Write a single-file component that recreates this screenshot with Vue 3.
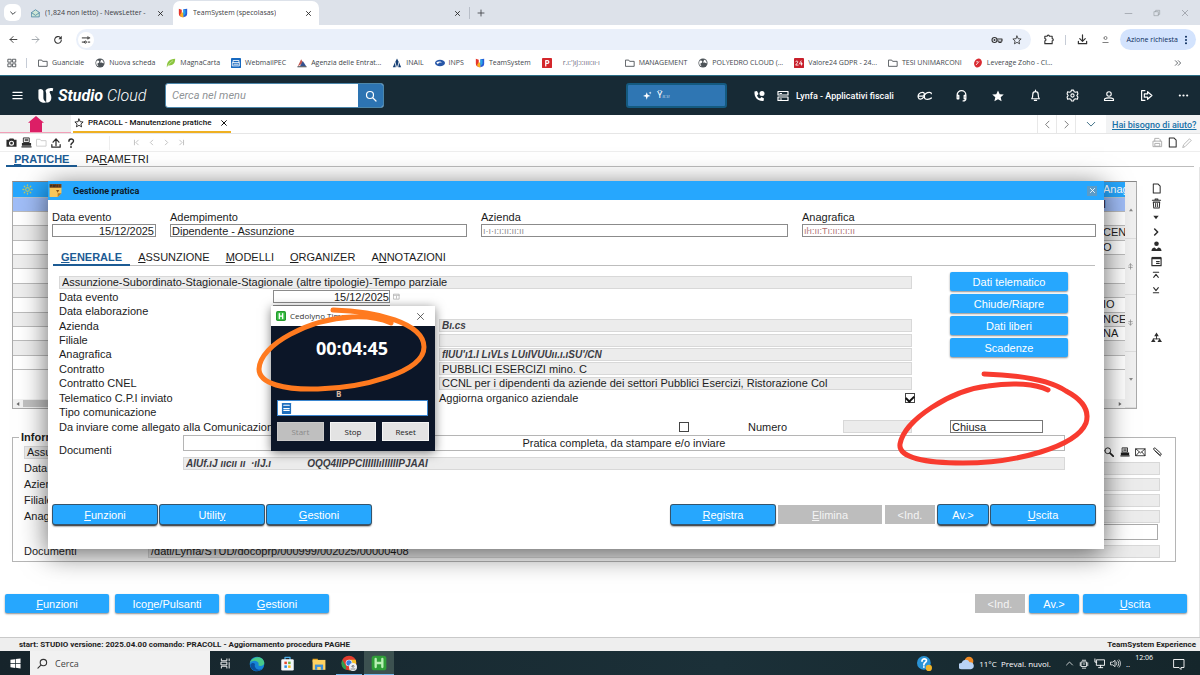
<script setup>
import { h, ref } from 'vue'

const S = (d, w = 2) => ['path', { d, fill: 'none', stroke: 'currentColor', 'stroke-width': w, 'stroke-linecap': 'round', 'stroke-linejoin': 'round' }]
const F = (d, fill = 'currentColor') => ['path', { d, fill }]
const C = (cx, cy, r, fill = 'currentColor') => ['circle', { cx, cy, r, fill }]
const R = (x, y, width, height, fill = 'currentColor', rx = 0) => ['rect', { x, y, width, height, fill, rx }]

const star = 'M12 2.5l2.9 6.4 7 .7-5.300 4.700 1.600 6.900L12 17.600l-6.200 3.600 1.600-6.900L2.100 9.600l7-.7z'

const icons = {
  chevDown: [S('M5 9l7 7 7-7', 3)],
  chevThin: [S('M3 8l9 9 9-9', 2)],
  chevUp: [S('M4 16l8-8 8 8', 2)],
  left: [S('M16 3l-9 9 9 9')],
  right: [S('M8 3l9 9-9 9')],
  leftBold: [S('M16 4l-8 8 8 8', 3)],
  rightBold: [S('M8 3l9 9-9 9', 4.500)],
  next: [S('M8 4l8 8-8 8', 3)],
  first: [S('M5 4v16M18 4l-8 8 8 8', 3)],
  last: [S('M19 4v16M6 4l8 8-8 8', 3)],
  close: [S('M5 5l14 14M19 5L5 19', 3)],
  closeThin: [S('M4 4l16 16M20 4L4 20', 2)],
  plus: [S('M12 3v18M3 12h18', 2.500)],
  minus: [S('M3 12h18', 1.600)],
  restore: [S('M4 8h12v12H4zM8 8V4h12v12h-4', 1.600)],
  mail: [F('M2 9l10-7 10 7v12H2z', '#cfe6d6'), S('M2 9l10-7 10 7v12H2zM2 10l10 7 10-7', 2)],
  arrowL: [S('M21 12H3M11 4l-8 8 8 8', 2.400)],
  arrowR: [S('M3 12h18M13 4l8 8-8 8', 2.400)],
  reload: [S('M20 12a8 8 0 1 1-2.500-6', 2.500), F('M21 2v8h-8z')],
  tune: [S('M3 7h8M17 17h4M3 17h4M20 7h1', 2.400), S('M14 7a2.500 2.500 0 1 0 5 0a2.500 2.500 0 1 0-5 0M8 17a2.500 2.500 0 1 0 5 0a2.500 2.500 0 1 0-5 0', 2.400)],
  key: [S('M2 12a5 5 0 1 0 10 0a5 5 0 1 0-10 0M12 10h10v4h-2v3h-4v-3h-4', 2.200), C(7, 12, 2)],
  star: [S(star, 2)],
  starFull: [F(star)],
  puzzle: [S('M4 5h5a2.500 2.500 0 0 1 5 0h6v5a2.500 2.500 0 0 1 0 5v6H4v-6a2.500 2.500 0 0 0 0-5z', 2.400)],
  download: [S('M12 2v13M6 10l6 6 6-6M3 16v5h18v-5', 2.600)],
  person: [S('M8 8a4 4 0 1 0 8 0a4 4 0 1 0-8 0M5 20h14', 2.500)],
  dotsV: [C(12, 4, 2.400), C(12, 12, 2.400), C(12, 20, 2.400)],
  dotsH: [C(4, 12, 2.400), C(12, 12, 2.400), C(20, 12, 2.400)],
  apps: [S('M3 3h7v7H3zM14 3h7v7h-7zM3 14h7v7H3zM14 14h7v7h-7z', 2)],
  folder: [S('M2 5h7l2 3h11v12H2z', 2)],
  globe: [C(12, 12, 11, '#4d5358'), F('M4 7c4-3 7 0 6 3s-5 1-4 5 3 4 2 5c-4-2-7-8-4-13zM14 4c5 0 7 5 7 8-3 2-4-2-7-1s-2-3 0-3z', '#fff')],
  leaf: [F('M2 22C2 8 8 3 22 2c0 12-6 17-17 16z', '#8bc53f'), S('M3 21C7 14 11 10 16 7', 1.500)],
  webmail: [R(0, 0, 24, 24, '#1769c0', 2), S('M5 11V6h14v5M4 11h16v8H4zM7 15h10', 2)],
  agenzia: [F('M2 20L10 3l5 9z', '#c2574f'), F('M7 20l7-13 8 13z', '#34518f'), S('M2 21h20', 2.500)],
  inail: [F('M12 1l4 8-4 14-4-14zM7 11l2 11H2zM17 11l5 11h-7z', '#163f74')],
  inps: [['ellipse', { cx: 12, cy: 12, rx: 12, ry: 8, fill: '#2857a8' }], F('M3 11c5-4 11-3 14 0-5-1-9 0-10 4z', '#fff')],
  team: [F('M2 2l7 2v10c0 3 3 4 3 8C6 22 2 19 2 14z', '#e5352b'), F('M9 10l5 2v10C9 23 5 20 5 16z', '#f7b025'), F('M13 3l9-1v12c0 5-4 8-9 8z', '#2a5bd7'), F('M13 3l5 1v10l-5 6z', '#25a7e8')],
  pBox: [R(0, 0, 24, 24, '#d4272b', 1), S('M9 19V6h4a3.500 3.500 0 0 1 0 7H9', 3)],
  box24: [R(0, 0, 24, 24, '#c8202b', 1), S('M4 9c1-3 6-2 5 1l-5 7h6M17 7l-4 7h7M18 11v6', 2)],
  zoho: [['ellipse', { cx: 12, cy: 12, rx: 9, ry: 11, fill: '#d92b32', transform: 'rotate(25 12 12)' }], S('M8 16l6-7M9 9l2 0', 2)],
  more: [S('M4 5l7 7-7 7M13 5l7 7-7 7', 2.400)],
  menu: [S('M2 5h20M2 12h20M2 19h20', 2.600)],
  logo: [F('M2 4c3-2 6-1 7 2v10c0 3 3 4 4 6-6 1-11-2-11-7z'), F('M12 5c3-4 8-4 11-3l-1 4c-3-1-5 0-4 2 4 6 3 14-5 14V9z')],
  search: [S('M3 10a7 7 0 1 0 14 0a7 7 0 1 0-14 0M15.500 15.500L22 22', 2.400)],
  sparkle: [F('M10 3l2.500 7L20 13l-7.500 2.500L10 23l-2.500-7.500L0 13l7.500-3zM19 1l1 3 3 1-3 1-1 3-1-3-3-1 3-1z')],
  phone: [F('M3 3l5-1 3 6-3 3c1 3 3 5 6 6l3-3 5 3-1 5C10 23 2 15 3 3z'), C(18, 7, 5)],
  stack: [S('M2 3h20v7H2zM2 14h20v7H2zM6 7h3M6 18h3', 2.400)],
  ec: [S('M2 13h7c3 0 4-6 0-6-5 0-8 4-7 8s6 4 9-1c1-4 5-7 9-7 2 0 3 1 3 2M12 13c-1 4 2 5 5 5s5-1 6-2', 2)],
  headset: [S('M4 14V11a8 8 0 0 1 16 0v7c0 2-2 4-5 4M4 12h3v6H4zM17 12h3v6h-3z', 2.400)],
  bell: [S('M5 18c1.500-2 2-4 2-8a5 5 0 0 1 10 0c0 4 .5 6 2 8zM10 21h4M12 2v2', 2.200)],
  gear: [S('M10 2h4l1 3 3 1 3-1 1 4-2 3 2 3-1 4-3-1-3 1-1 3h-4l-1-3-3-1-3 1-1-4 2-3-2-3 1-4 3 1 3-1zM9 12a3 3 0 1 0 6 0a3 3 0 1 0-6 0', 2)],
  user: [S('M7.500 8a4.500 4.500 0 1 0 9 0a4.500 4.500 0 1 0-9 0M3 21v-3c4-3 14-3 18 0v3z', 2.200)],
  logout: [S('M9 3H3v18h6', 2.200), S('M8 9h6V5l8 7-8 7v-4H8z', 2.200)],
  home: [F('M12 0l12 10h-3v14H3V10H0z')],
  camera: [F('M1 6h5l2-3h8l2 3h5v15H1zM12 8a5.500 5.500 0 1 0 0 11 5.500 5.500 0 0 0 0-11zM12 10.500a3 3 0 1 1 0 6 3 3 0 0 1 0-6z')],
  printer: [S('M6 2h12v10H6zM9 5h6M9 8h6', 2), F('M2 13h20v6H2zM1 20h22v3H1z')],
  printerOut: [S('M6 9V3h9l3 3v3M3 9h18v12H3zM7 14h10v6H7z', 2)],
  upload: [S('M12 18V3M5 10l7-8 7 8M2 16v6h20v-6', 3)],
  help: [S('M7 8c0-7 11-7 11-1 0 5-6 4-6 9', 3.500), C(12, 21.500, 2.200)],
  page: [S('M5 2h10l5 5v15H5z', 2.200)],
  pencil: [S('M2 22l2-6L18 2l4 4L8 20z', 2)],
  trash: [S('M3 5h18M9 5V2h6v3M5 9l1 13h12l1-13z', 2.200), S('M10 12v7M14 12v7', 2)],
  tri: [F('M4 8h16l-8 11z')],
  triUp: [F('M4 17h16L12 6z')],
  triLeft: [F('M17 4v16L6 12z')],
  triRight: [F('M7 4v16l11-8z')],
  people: [C(12, 6, 5), F('M1 22c0-6 4-8 7-8l4 4 4-4c3 0 7 2 7 8z')],
  card: [S('M2 4h20v17H2zM12 12h6M12 16h6', 2.500), F('M2 2h20v5H2z')],
  top: [S('M4 4h16M5 19l7-9 7 9', 3.200)],
  bottom: [S('M4 20h16M5 5l7 9 7-9', 3.200)],
  tree: [F('M12 1l5 8H7zM5 14l5 8H0zM19 14l5 8H14z'), S('M12 9v6M5 15h14', 2)],
  updown: [S('M6 9l6-6 6 6M12 3v18M6 15h12', 2.500)],
  downup: [S('M6 15l6 6 6-6M12 3v18M6 9h12', 2.500)],
  loupe: [S('M2 9a7 7 0 1 0 14 0a7 7 0 1 0-14 0', 2.200), S('M14.500 14.500L22 22', 4)],
  envelope: [S('M2 4h20v15H2zM2 4l10 9L22 4M2 19l7-8M22 19l-7-8', 1.800)],
  clip: [S('M20 21L5 7c-3-3 0-6 3-4l13 12c3 3 0 6-3 4L8 10', 2.200)],
  sun: [S('M8 12a4 4 0 1 0 8 0a4 4 0 1 0-8 0', 2.500), S('M12 2v2M12 20v2M2 12h2M20 12h2M5 5l1 1M18 18l1 1M19 5l-1 1M6 18l-1 1', 3)],
  note: [F('M1 5h22v12l-7 7H1z', '#f7c65b'), R(1, 0, 22, 7, '#7c4a1d'), S('M3 5V2h2v2M8 5V2h2v3M13 5V2h-1M16 2v3M20 2v3', 1), F('M16 24v-7h7z', '#b87a22'), F('M13 11l6 0-3 5z', '#8b5317')],
  calendar: [S('M3 4h18v17H3zM3 8h18M12 11v7', 2)],
  win: [F('M1 4l10-1.500V11.500H1zM12.500 2.300L23 1v10.500H12.500zM1 13h10v8.700L1 20.300zM12.500 13H23v10l-10.500-1.500z')],
  taskview: [S('M3 2v4h12V2M3 22v-4h12v4M3 9h12v6H3zM20 2v4M20 10v12', 2)],
  edge: [C(12, 12, 11, '#1683d8'), F('M1 11C3 0 21-2 23 10c0 5-7 6-9 4 3-6-8-10-13-3z', '#49c98b'), F('M9 12c-2 6 4 11 11 7-5 6-18 4-18-6 2-3 5-3 7-1z', '#0b4f9c')],
  store: [S('M8 6V2h8v4', 2), R(2, 5, 20, 18, '#f4f7fa', 2), R(7, 9, 4, 4, '#e6492d'), R(13, 9, 4, 4, '#6cb33e'), R(7, 15, 4, 4, '#2a8fe0'), R(13, 15, 4, 4, '#f5b81d')],
  explorer: [R(1, 3, 9, 6, '#e8a320'), R(1, 5, 22, 17, '#ffd262'), R(5, 13, 14, 9, '#3f8fd8'), R(9, 17, 6, 5, '#ffd262')],
  chrome: [C(12, 12, 11, '#e23d2f'), F('M2 7l6 11-1 4C1 20-1 13 2 7z', '#2f9e4d'), F('M12 7h10c3 8-3 16-10 16l5-9z', '#f6c026'), C(12, 12, 5, '#fff'), C(12, 12, 4, '#3b7de0'), C(18, 18, 6, '#eef0f2'), S('M16.500 17a1.500 1.500 0 1 0 3 0a1.500 1.500 0 1 0-3 0M15 21h6', 1)],
  hApp: [R(1, 1, 22, 22, '#2f9e38', 4), S('M7 6v12M17 6v12M7 12h10', 3.500)],
  hWin: [R(0, 0, 24, 24, '#239a2c', 4), R(3, 3, 18, 18, '#3fc24a', 2), S('M8 6v12M16 6v12M8 12h8', 3)],
  entry: [R(2, 0, 20, 24, '#1f6fbe', 1), S('M6 5h12M6 12h12M6 16h12', 2.500)],
  helpBlue: [C(11, 11, 11, '#2a93d5'), S('M8 8c0-5 8-4 7 0-1 3-4 2-4 6M11 17.500v.2', 2.800), C(19, 19, 5, '#f0b429')],
  cloud: [C(16, 8, 7, '#f08a24'), F('M4 21a5 5 0 0 1 0-10 7 7 0 0 1 13-1 5.500 5.500 0 0 1 2 11z', '#b9d3f5')],
  cast: [S('M6 7h12v11H6zM8 3h8M8 22h8M10 12h4M3 9v7M21 9v7', 2)],
  screen: [S('M6 4h17v12H6zM2 2v7h4M10 21h9M14 16v5', 2)],
  sound: [S('M2 9h4l5-4v14l-5-4H2zM14 9c1 2 1 4 0 6M17 6c3 4 3 8 0 12M20 4c4 5 4 11 0 16', 1.700)],
  chat: [S('M2 3h20v16h-6v4l-4-4H2z', 1.800)],
}

const Ico = (p) =>
  h('svg', { viewBox: '0 0 24 24', width: p.size || 10, height: p.size || 10, 'aria-hidden': 'true', class: 'ico' },
    icons[p.name].map(([tag, attrs]) => h(tag, attrs)))
Ico.props = ['name', 'size']

const bookmarks = [
  { icon: 'folder', text: 'Guanciale' },
  { icon: 'globe', text: 'Nuova scheda' },
  { icon: 'leaf', text: 'MagnaCarta', tone: 'pale' },
  { icon: 'webmail', text: 'WebmailPEC', tone: 'white' },
  { icon: 'agenzia', text: 'Agenzia delle Entrat...' },
  { icon: 'inail', text: 'INAIL' },
  { icon: 'inps', text: 'INPS' },
  { icon: 'team', text: 'TeamSystem' },
  { icon: 'pBox', text: 'r.ı:\')ıJ:ı:ıııı:ıı·ı', tone: 'white', smudge: true },
  { icon: 'folder', text: 'MANAGEMENT' },
  { icon: 'globe', text: 'POLYEDRO CLOUD (...' },
  { icon: 'box24', text: 'Valore24 GDPR - 24...', tone: 'white' },
  { icon: 'folder', text: 'TESI UNIMARCONI' },
  { icon: 'zoho', text: 'Leverage Zoho - Cl...', tone: 'white' },
]
const headerIcons = [
  ['ec', 'Euroconference', 15], ['headset', 'Assistenza', 13], ['starFull', 'Preferiti', 14], ['bell', 'Notifiche', 13],
  ['gear', 'Impostazioni', 13], ['user', 'Profilo', 12], ['logout', 'Esci', 13], ['dotsH', 'Altro', 11],
]
const gridRows = ['I', '', 'CEN', 'O', '', '', '', 'IO', 'NCES', 'NA', '', '']
const sideIcons = [
  ['page', 'Nuovo'], ['trash', 'Elimina riga'], ['tri', 'Giù'], ['rightBold', 'Avanti'], ['people', 'Anagrafica'],
  ['card', 'Scheda'], ['top', 'Inizio'], ['bottom', 'Fine'],
]
const infoRows = ['Data evento', 'Azienda', 'Filiale', 'Anagrafica']
const dialogTabs = [['', 'G', 'ENERALE'], ['', 'A', 'SSUNZIONE'], ['', 'M', 'ODELLI'], ['', 'O', 'RGANIZER'], ['A', 'N', 'NOTAZIONI']]
const formRows = [
  { id: 'azienda', label: 'Azienda', value: 'Bı.cs', smudge: true },
  { id: 'filiale', label: 'Filiale', value: '' },
  { id: 'anagrafica', label: 'Anagrafica', value: 'fIUU\'ı1.I LıVLs LUıIVUUıı.ı.ıSU\'/CN', smudge: true },
  { id: 'contratto', label: 'Contratto', value: 'PUBBLICI ESERCIZI mino. C' },
  { id: 'cnel', label: 'Contratto CNEL', value: 'CCNL per i dipendenti da aziende dei settori Pubblici Esercizi, Ristorazione Col' },
]
const actions = ['Dati telematico', 'Chiude/Riapre', 'Dati liberi', 'Scadenze']
const organico = ref(true)
const allegato = ref(false)
</script>

<template>
  <div class="page">
    <div class="tabstrip">
      <button class="tab-menu" aria-label="Cerca schede"><Ico name="chevDown" :size="8" /></button>
      <div class="btab inactive">
        <Ico name="mail" :size="9" class="blue" /><span class="btab-name">(1,824 non letto) - NewsLetter -</span>
        <button aria-label="Chiudi scheda"><Ico name="close" :size="7" /></button>
      </div>
      <div class="btab active">
        <Ico name="team" :size="10" /><span class="btab-name">TeamSystem (specolasas)</span>
        <button aria-label="Chiudi scheda"><Ico name="close" :size="7" /></button>
      </div>
      <div class="btab third"><button aria-label="Chiudi scheda"><Ico name="close" :size="7" /></button></div>
      <button class="new-tab" aria-label="Nuova scheda"><Ico name="plus" :size="8" /></button>
      <div class="win-controls">
        <button aria-label="Riduci"><Ico name="minus" :size="9" /></button>
        <button aria-label="Ripristina"><Ico name="restore" :size="8" /></button>
        <button aria-label="Chiudi"><Ico name="closeThin" :size="8" /></button>
      </div>
    </div>

    <div class="navbar">
      <button aria-label="Indietro"><Ico name="arrowL" :size="9" /></button>
      <button aria-label="Avanti" class="faint"><Ico name="arrowR" :size="9" /></button>
      <button aria-label="Ricarica"><Ico name="reload" :size="10" /></button>
      <div class="omnibox">
        <span class="tune"><Ico name="tune" :size="10" /></span>
        <input type="text" aria-label="Indirizzo" />
        <Ico name="key" :size="12" /><Ico name="star" :size="10" />
      </div>
      <button aria-label="Estensioni"><Ico name="puzzle" :size="11" /></button>
      <span class="vline"></span>
      <button aria-label="Download"><Ico name="download" :size="11" /></button>
      <button aria-label="Profilo" class="dim"><Ico name="person" :size="9" /></button>
      <button class="action-required">Azione richiesta <Ico name="dotsV" :size="10" /></button>
    </div>

    <nav class="bookmarks" aria-label="Preferiti">
      <button aria-label="App"><Ico name="apps" :size="10" /></button>
      <span class="vline"></span>
      <a v-for="b in bookmarks" :key="b.text" href="#" :class="{ smudge: b.smudge }">
        <Ico :name="b.icon" :size="10" :class="b.tone" /><span>{{ b.text }}</span>
      </a>
      <button class="more" aria-label="Altri preferiti"><Ico name="more" :size="8" /></button>
    </nav>

    <header class="apphead">
      <button class="burger" aria-label="Menu"><Ico name="menu" :size="11" /></button>
      <div class="brand"><Ico name="logo" :size="17" /><span><b>Studio</b> Cloud</span></div>
      <form class="search" @submit.prevent>
        <input type="text" placeholder="Cerca nel menu" aria-label="Cerca nel menu" />
        <button aria-label="Cerca"><Ico name="search" :size="12" /></button>
      </form>
      <button class="ai"><Ico name="sparkle" :size="9" /><span class="ai-text">Ÿ<i>ıı:ıı</i></span></button>
      <div class="product">
        <Ico name="phone" :size="12" /><Ico name="stack" :size="12" /><span>Lynfa - Applicativi fiscali</span>
      </div>
      <div class="head-icons">
        <button v-for="[n, l, s] in headerIcons" :key="n" :aria-label="l"><Ico :name="n" :size="s" /></button>
      </div>
    </header>

    <div class="apptabs">
      <button class="home" aria-label="Home"><Ico name="home" :size="16" /></button>
      <div class="apptab"><Ico name="star" :size="10" /><span>PRACOLL - Manutenzione pratiche</span><button aria-label="Chiudi"><Ico name="close" :size="8" /></button></div>
      <div class="apptabs-nav">
        <button aria-label="Precedente"><Ico name="left" :size="9" /></button>
        <button aria-label="Successivo"><Ico name="right" :size="9" /></button>
        <button aria-label="Elenco" class="wide"><Ico name="chevThin" :size="10" /></button>
      </div>
      <a href="#" class="help-link">Hai bisogno di aiuto?</a>
    </div>

    <div class="tools">
      <div class="tool-set">
        <button aria-label="Cattura"><Ico name="camera" :size="11" /></button>
        <button aria-label="Stampa"><Ico name="printer" :size="11" /></button>
        <button aria-label="Apri" class="off"><Ico name="folder" :size="11" /></button>
        <button aria-label="Esporta"><Ico name="upload" :size="10" /></button>
        <button aria-label="Guida"><Ico name="help" :size="10" /></button>
      </div>
      <div class="tool-set pager">
        <button aria-label="Primo"><Ico name="first" :size="7" /></button>
        <button aria-label="Precedente"><Ico name="leftBold" :size="7" /></button>
        <button aria-label="Successivo"><Ico name="next" :size="7" /></button>
        <button aria-label="Ultimo"><Ico name="last" :size="7" /></button>
      </div>
      <div class="tool-set end">
        <button aria-label="Stampa elenco" class="grey"><Ico name="printerOut" :size="11" /></button>
        <button aria-label="Nuovo"><Ico name="page" :size="11" /></button>
        <button aria-label="Modifica" class="grey"><Ico name="pencil" :size="10" /></button>
      </div>
    </div>

    <nav class="maintabs" aria-label="Sezioni">
      <a href="#" class="current"><u>P</u>RATICHE</a>
      <a href="#">PA<u>R</u>AMETRI</a>
    </nav>

    <main class="workspace">
      <div class="listing">
        <div class="grid-frame">
          <div class="grid-main">
            <table>
              <thead><tr><th><Ico name="sun" :size="11" class="sun" /></th><th class="name">Anag</th></tr></thead>
              <tbody><tr v-for="(r, i) in gridRows" :key="i"><td></td><td class="name">{{ r }}</td></tr></tbody>
            </table>
            <div class="hscroll"><Ico name="triLeft" :size="6" /><span class="thumb"></span><Ico name="triRight" :size="6" /></div>
          </div>
          <div class="vscroll">
            <span><Ico name="triUp" :size="6" /></span><span><Ico name="updown" :size="7" /></span>
            <span><Ico name="downup" :size="7" /></span><span><Ico name="tri" :size="6" /></span>
          </div>
        </div>
        <div class="side">
          <div class="side-icons">
            <button v-for="[n, l] in sideIcons" :key="n" :aria-label="l"><Ico :name="n" :size="['tri', 'top', 'bottom', 'rightBold'].includes(n) ? 8 : 11" /></button>
          </div>
          <button class="tree" aria-label="Struttura"><Ico name="tree" :size="11" /></button>
        </div>
      </div>

      <fieldset class="info">
        <legend>Informazioni</legend>
        <div class="info-head">
          <div class="ro">Assunzione</div>
          <div class="info-icons">
            <button aria-label="Cerca"><Ico name="loupe" :size="10" /></button>
            <button aria-label="Stampa"><Ico name="printer" :size="10" /></button>
            <button aria-label="Invia"><Ico name="envelope" :size="11" /></button>
            <button aria-label="Allega"><Ico name="clip" :size="10" /></button>
          </div>
        </div>
        <div v-for="r in infoRows" :key="r" class="info-row"><span>{{ r }}</span><div class="ro"></div></div>
        <div class="info-note"></div>
        <div class="info-row"><span>Documenti</span><div class="ro">/dati/Lynfa/STUD/docoprp/000999/002025/00000408</div></div>
      </fieldset>

      <div class="foot">
        <div class="left">
          <button class="btn"><u>F</u>unzioni</button>
          <button class="btn">Ico<u>n</u>e/Pulsanti</button>
          <button class="btn"><u>G</u>estioni</button>
        </div>
        <div class="right">
          <button class="btn small disabled" disabled>&lt;Ind.</button>
          <button class="btn small">Av.&gt;</button>
          <button class="btn"><u>U</u>scita</button>
        </div>
      </div>

      <section class="dialog" role="dialog" aria-label="Gestione pratica">
        <div class="titlebar">
          <Ico name="note" :size="13" class="brown" /><span>Gestione pratica</span>
          <button aria-label="Chiudi"><Ico name="close" :size="7" /></button>
        </div>
        <div class="keys">
          <div><label for="k1">Data evento</label><input id="k1" type="text" value="15/12/2025" class="num" /></div>
          <div><label for="k2">Adempimento</label><input id="k2" type="text" value="Dipendente - Assunzione" /></div>
          <div><label for="k3">Azienda</label><input id="k3" type="text" value="ı·ı·ı:ı:ıı:ıı:ıı" class="ghost" /></div>
          <div><label for="k4">Anagrafica</label><input id="k4" type="text" value="ıŀı:ıı:Tı:ıı:ı:ı:ıı" class="ghost red" /></div>
        </div>
        <nav class="dtabs" aria-label="Schede pratica">
          <a v-for="(t, i) in dialogTabs" :key="i" href="#" :class="{ current: i === 0 }">{{ t[0] }}<u>{{ t[1] }}</u>{{ t[2] }}</a>
        </nav>
        <div class="body">
          <div class="rows">
            <input class="ro summary" type="text" readonly aria-label="Descrizione" value="Assunzione-Subordinato-Stagionale-Stagionale (altre tipologie)-Tempo parziale" />
            <div class="row">
              <label for="f-ev">Data evento</label>
              <span class="date"><input id="f-ev" type="text" value="15/12/2025" class="num" /><Ico name="calendar" :size="7" /></span>
            </div>
            <div class="row">
              <label for="f-el">Data elaborazione</label>
              <span class="date"><input id="f-el" type="text" value="15/12/2025" class="num" /></span>
            </div>
            <div v-for="r in formRows" :key="r.id" class="row">
              <label :for="r.id">{{ r.label }}</label><span></span>
              <input :id="r.id" class="ro" :class="{ scrambled: r.smudge }" type="text" readonly :value="r.value" />
            </div>
            <div class="row">
              <span>Telematico C.P.I inviato</span><span></span>
              <label class="between">Aggiorna organico aziendale <input v-model="organico" type="checkbox" /></label>
            </div>
            <div class="row"><span>Tipo comunicazione</span></div>
            <div class="row">
              <label for="alleg">Da inviare come allegato alla Comunicazione</label><span></span>
              <span class="numero">
                <input id="alleg" v-model="allegato" type="checkbox" />
                <label for="numero">Numero</label>
                <input id="numero" class="ro" type="text" readonly />
              </span>
            </div>
          </div>
          <div class="aside">
            <button v-for="a in actions" :key="a" class="btn">{{ a }}</button>
            <input type="text" value="Chiusa" aria-label="Stato" class="state" />
          </div>
        </div>
        <div class="docs">
          <label for="doc">Documenti</label>
          <div>
            <input id="doc" type="text" class="doc-text" value="Pratica completa, da stampare e/o inviare" />
            <input type="text" readonly aria-label="Percorso" class="ro scrambled" value="AIUf.ıJ ııcıı ıı  ·ıIJ.ı             OQQ4IIPPCIIIIIIıIIIIIIPJAAI" />
          </div>
        </div>
        <div class="dfoot">
          <div class="left">
            <button class="btn ring"><u>F</u>unzioni</button>
            <button class="btn ring">Utilit<u>y</u></button>
            <button class="btn ring"><u>G</u>estioni</button>
          </div>
          <div class="right">
            <button class="btn ring"><u>R</u>egistra</button>
            <button class="btn disabled" disabled><u>E</u>limina</button>
            <button class="btn small disabled" disabled>&lt;Ind.</button>
            <button class="btn small ring">Av.&gt;</button>
            <button class="btn ring"><u>U</u>scita</button>
          </div>
        </div>

        <div class="timer">
          <div class="timer-title">
            <Ico name="hWin" :size="10" class="white" /><span>Cedolyno Time...</span>
            <button aria-label="Chiudi"><Ico name="closeThin" :size="9" /></button>
          </div>
          <output>00:04:45</output>
          <span class="timer-mark">B</span>
          <label class="timer-field"><Ico name="entry" :size="11" class="white" /><input type="text" aria-label="Attività" /></label>
          <div class="timer-buttons">
            <button disabled>Start</button><button>Stop</button><button>Reset</button>
          </div>
        </div>
        <svg class="mark orange" viewBox="0 0 176 90" width="176" height="90" aria-hidden="true">
          <path d="M79 7C122 8 170 20 170 44C170 70 106 85 64 86C31 87 5 81 5 66C6 41 56 16 98 14C118 13 130 17 137 20" />
        </svg>
        <svg class="mark red" viewBox="0 0 200 100" width="200" height="100" aria-hidden="true">
          <path d="M88 8C120 9 152 13 170 25C187 34 194 44 190 57C180 81 120 97 67 97C30 97 2 92 4 78C8 54 55 24 92 20C118 16 140 18 152 24" />
        </svg>
      </section>
    </main>

    <footer class="status"><span>start: STUDIO versione: 2025.04.00 comando: PRACOLL - Aggiornamento procedura PAGHE</span><span>TeamSystem Experience</span></footer>

    <div class="taskbar">
      <button class="start" aria-label="Start"><Ico name="win" :size="11" /></button>
      <label class="tsearch"><Ico name="search" :size="11" class="flip" /><input type="text" placeholder="Cerca" aria-label="Cerca" /></label>
      <button aria-label="Visualizzazione attività"><Ico name="taskview" :size="11" /></button>
      <button aria-label="Edge"><Ico name="edge" :size="16" /></button>
      <button aria-label="Store"><Ico name="store" :size="15" class="sky" /></button>
      <button aria-label="Esplora file"><Ico name="explorer" :size="14" /></button>
      <button aria-label="Chrome" class="running"><Ico name="chrome" :size="16" class="dark" /></button>
      <button aria-label="Cedolyno" class="running focus"><Ico name="hApp" :size="16" class="mint" /></button>
      <div class="tray">
        <Ico name="helpBlue" :size="15" class="tray-help" /><Ico name="cloud" :size="15" />
        <span class="weather">11°C&nbsp; Preval. nuvol.</span>
        <Ico name="chevUp" :size="9" /><Ico name="cast" :size="10" /><Ico name="screen" :size="11" /><Ico name="sound" :size="11" />
        <span class="ddots">..</span><time>12:06</time><Ico name="chat" :size="12" class="chat" />
      </div>
    </div>
  </div>
</template>

<style>
html, body { background: #fff; }
</style>

<style scoped>
.page { display: flex; flex-direction: column; min-height: 100vh; overflow: hidden; font: 11px/14px "Liberation Sans", Arial, sans-serif; color: #1c1c1c; }
.page * { box-sizing: border-box; }
button { border: 0; padding: 0; margin: 0; background: none; color: inherit; font: inherit; display: inline-flex; align-items: center; justify-content: center; flex: none; white-space: nowrap; }
input { font: inherit; color: inherit; margin: 0; min-width: 0; border: 0; padding: 0; outline: 0; background: none; border-radius: 0; }
a { color: inherit; text-decoration: none; white-space: nowrap; }
label, span { white-space: nowrap; }
.ico { display: block; flex: none; }
.white { color: #fff; }
.pale { color: #d9efb8; }
.blue { color: #3d7d9e; }
.vline { width: 1px; height: 10px; background: #c6ccd6; flex: none; }

.tabstrip { display: flex; align-items: flex-end; height: 25px; background: #dde2ea; font: 7px/10px "Open Sans", sans-serif; color: #3c4043; }
.tab-menu { width: 17px; height: 17px; margin: 0 5px 4px 4px; background: #fff; border-radius: 6px; }
.btab { display: flex; align-items: center; height: 24px; gap: 5px; padding: 0 7px 0 5px; }
.btab button { margin-left: auto; color: #222; }
.btab-name { overflow: hidden; }
.inactive { width: 147px; padding-right: 9px; }
.active { width: 146px; background: #fff; border-radius: 7px 7px 0 0; }
.third { width: 150px; padding-right: 8px; }
.new-tab { height: 12px; width: 22px; border-left: 1px solid #b8bec8; margin-bottom: 6px; }
.win-controls { margin-left: auto; display: flex; align-items: center; height: 24px; gap: 20px; padding-right: 11px; color: #888d94; }

.navbar { display: flex; align-items: center; height: 25px; background: #fff; padding: 4px 4px 0 9px; color: #333; font: 7px/10px "Open Sans", sans-serif; }
.navbar > button { margin-right: 13px; }
.faint { color: #9aa0a6; }
.navbar > .dim { color: #777; margin-right: 10px; }
.omnibox { flex: 1; display: flex; align-items: center; gap: 9px; height: 21px; border-radius: 11px; background: #eaf0fa; padding: 0 9px 0 2px; margin-right: 12px; }
.omnibox input { flex: 1; }
.tune { width: 16px; height: 16px; border-radius: 8px; background: #fff; display: flex; align-items: center; justify-content: center; }
.navbar .vline { margin: 0 11px 0 -2px; }
.navbar > .action-required { background: #d3e3fd; border-radius: 11px; height: 21px; padding: 0 5px 0 7px; margin: 0; color: #0a2c5c; gap: 3px; }

.bookmarks { display: flex; align-items: center; height: 25px; background: #fff; padding: 0 18px 0 7px; font: 7px/10px "Open Sans", sans-serif; color: #41464b; gap: 11px; }
.bookmarks a { display: flex; align-items: center; gap: 4px; }
.bookmarks .vline { margin: 0 0 0 -2px; }
.bookmarks .smudge span { width: 58px; padding-left: 7px; color: #6d6a80; }
.more { margin-left: auto; }

.apphead { display: flex; align-items: center; height: 40px; background: #172a35; border-top: 1px solid #2b6e86; color: #fff; font-family: Roboto, sans-serif; }
.burger { margin-left: 12px; }
.brand { display: flex; align-items: center; gap: 4px; margin-left: 14px; width: 128px; font-size: 16px; font-style: italic; font-weight: 300; }
.brand b { font-weight: 700; }
.search { display: flex; width: 219px; height: 25px; border: 1px solid #4c87ab; border-radius: 3px; overflow: hidden; background: #fff; }
.search input { flex: 1; padding: 0 6px; font-size: 11px; font-style: italic; color: #333; }
.search input::placeholder { color: #8f9396; opacity: 1; }
.search button { width: 25px; background: #2d74b2; }
.ai { margin-left: auto; width: 101px; height: 25px; background: #2f76b3; border: 2px solid #145a80; border-radius: 3px; justify-content: flex-start; padding-left: 15px; gap: 5px; font-size: 9px; }
.ai-text i { font-size: 6px; opacity: .6; }
.product { display: flex; align-items: center; gap: 12px; width: 140px; margin: 0 19px 0 26px; font-size: 9px; font-weight: 500; }
.product span { margin-left: -5px; }
.head-icons { display: flex; gap: 13px; padding-right: 5px; }
.head-icons button { width: 24px; height: 24px; }

.apptabs { display: flex; align-items: stretch; height: 19px; background: #fff; font: 500 8px/10px Roboto, sans-serif; border-bottom: 1px solid #e6e6e6; }
.home { width: 71px; background: #efefef; color: #dc1f66; border-bottom: 1px solid #f2a0b8; }
.apptab { display: flex; align-items: center; gap: 4px; width: 158px; margin-left: 2px; padding: 0 3px 0 1px; border-bottom: 2px solid #efb021; color: #111; }
.apptab button { margin-left: auto; }
.apptabs-nav { display: flex; margin-left: auto; color: #555; }
.apptabs-nav button { width: 19px; border-left: 1px solid #e8e8e8; }
.apptabs-nav .wide { width: 31px; color: #1d5670; }
.help-link { width: 94px; padding: 5px 0 0 6px; background: #f2f3f4; color: #1671a8; font-size: 9px; text-decoration: underline; }

.tools { display: flex; align-items: center; height: 18px; border-bottom: 1px solid #eee; color: #2c2c2c; }
.tool-set { display: flex; align-items: center; padding-left: 4px; gap: 1px; }
.tool-set button { width: 14px; height: 14px; }
.tool-set:first-child { width: 110px; border-right: 1px solid #eee; }
.off { color: #ccc; }
.grey { color: #aaa; }
.pager { padding-left: 19px; color: #bbb; }
.end { margin-left: auto; padding-right: 6px; }

.maintabs { display: flex; height: 15px; margin: 0 6px; border-bottom: 1px solid #bdbdbd; }
.maintabs a { padding: 0 8px; height: 15px; }
.current { font-weight: 700; color: #1c5b94; border-bottom: 2px solid #1c5b94; }

.workspace { position: relative; flex: 1; display: flex; flex-direction: column; padding-top: 14px; box-shadow: inset -1px 0 #e4e4e4; }
.listing { display: flex; margin-left: 12px; height: 228px; }
.grid-frame { flex: 1; display: flex; border: 1px solid #aaa; border-top-color: #888; }
.grid-main { flex: 1; display: flex; flex-direction: column; min-width: 0; }
table { width: 100%; border-collapse: collapse; table-layout: fixed; height: 188px; }
th { height: 15px; background: #26a7fe; color: #fff; font-weight: 400; text-align: left; padding: 0 0 0 9px; border-bottom: 1px solid #b9c7d4; }
td { padding: 0; height: 14px; border-bottom: 1px solid #bbb; line-height: 13px; overflow: hidden; white-space: nowrap; }
tbody tr:nth-child(odd) { background: #eee; }
tbody tr:first-child { background: #a0bdf7; }
.name { width: 22px; padding: 0; overflow: hidden; white-space: nowrap; }
.sun { color: #b9c86a; }
.hscroll { margin-top: auto; height: 9px; background: #f1f1f1; display: flex; align-items: center; justify-content: space-between; padding: 0 2px; color: #666; }
.thumb { flex: 1; margin: 0 42px 0 2px; height: 7px; background: #c1c1c1; }
.vscroll { width: 11px; background: #f0f0f0; display: flex; flex-direction: column; justify-content: space-between; color: #888; }
.vscroll span { flex: 1; display: flex; justify-content: center; align-items: center; border-bottom: 1px solid #ddd; }
.side { width: 63px; padding-right: 25px; display: flex; flex-direction: column; align-items: center; color: #2c2c2c; }
.side-icons { display: grid; grid-auto-rows: 15px 14px 14px 15px; justify-items: center; align-items: center; }
.tree { margin-top: 33px; height: 14px; }

.info { margin: 21px 24px 0 12px; padding: 0 15px 2px 11px; border: 1px solid #b5b5b5; display: flex; flex-direction: column; }
.info legend { font-weight: 700; padding: 0 2px; margin-left: -5px; line-height: 14px; }
.ro { background: #ececec; border: 1px solid #d8d8d8; height: 13px; line-height: 11px; padding-left: 2px; flex: 1; }
.info-head { display: flex; align-items: center; height: 16px; }
.info-icons { display: flex; gap: 1px; padding-left: 10px; margin-right: -4px; }
.info-icons button { width: 15px; }
.info-row { display: flex; align-items: center; height: 16px; }
.info-row > span { width: 124px; flex: none; }
.info-note { height: 16px; margin: 0 2px 3px 124px; border: 1px solid #aaa; background: #fff; }

.foot, .dfoot { display: flex; align-items: center; justify-content: space-between; }
.foot { margin-top: 32px; padding: 0 13px 0 5px; margin-bottom: 24px; }
.left, .right { display: flex; }
.foot .left { gap: 6px; }
.foot .right { gap: 4px; }
.btn { width: 104px; height: 19px; background: #26a7fe; color: #fff; border-radius: 2px; box-shadow: 0 1px 2px rgba(0, 0, 0, .45); }
.small { width: 50px; }
.disabled { background: #bdbdbd; color: #f4f4f4; box-shadow: none; border-radius: 0; }
.ring { box-shadow: 0 0 0 1px #35546c, 0 2px 2px #111; }

.dialog { position: absolute; left: 4%; right: 8%; top: 14px; background: #fff; box-shadow: 0 5px 26px rgba(0, 0, 0, .6); display: flex; flex-direction: column; padding-bottom: 25px; }
.titlebar { display: flex; align-items: center; height: 19px; background: #26a7fe; padding: 0 7px 0 1px; font: 700 9px/12px Roboto, "Liberation Sans", sans-serif; color: #0b1a28; }
.titlebar span { margin-left: 11px; }
.titlebar button { margin-left: auto; width: 10px; height: 10px; background: #5b9cc8; color: #fff; }
.keys { display: grid; grid-template-columns: 118px 311px 321px 1fr; padding: 10px 8px 0 4px; }
.keys div { padding-right: 14px; }
.keys div:last-child { padding-right: 0; }
.keys label { display: block; }
.keys input { width: 100%; height: 13px; border: 1px solid #8b8b8b; padding: 0 1px; display: block; }
.num { text-align: right; }
.ghost { color: #888; font-size: 9px; }
.ghost.red { color: #b07070; }
.dtabs { display: flex; height: 16px; margin: 13px 9px 0 5px; gap: 16px; border-bottom: 1px solid #bdbdbd; line-height: 14px; }
.dtabs a { height: 16px; }
.dtabs .current { padding: 0 8px; margin-right: -8px; }
.body { display: flex; padding: 5px 36px 0 11px; gap: 38px; }
.rows { flex: 1; display: grid; grid-template-rows: repeat(2, 14px 15px 14px 15px 14px) 15px; padding-top: 4px; align-items: center; }
.summary { width: 100%; }
.row { display: grid; grid-template-columns: 214px 166px 1fr; align-items: center; }
.row > span:first-child, .row > label:first-child { width: 0; }
.row > .ro { width: 100%; }
.date { display: flex; align-items: center; gap: 3px; color: #999; }
.date input { width: 117px; height: 13px; border: 1px solid #8b8b8b; color: #1c1c1c; }
.scrambled { font-style: italic; font-weight: 700; font-size: 10px; color: #3c3c44; white-space: pre; }
.between { display: flex; justify-content: space-between; align-items: center; margin-right: -3px; }
input[type=checkbox] { appearance: none; width: 10px; height: 10px; border: 1px solid #444; background: #fff; display: flex; align-items: flex-start; justify-content: center; padding-top: 1px; flex: none; }
input[type=checkbox]:checked::after { content: ""; width: 6px; height: 4px; border-left: 2px solid #111; border-bottom: 2px solid #111; transform: rotate(-45deg); }
.numero { display: flex; align-items: center; justify-content: flex-end; }
.numero label { width: 95px; margin-left: 59px; }
.numero .ro { flex: none; width: 69px; }
.aside { width: 118px; display: flex; flex-direction: column; gap: 3px; padding-top: 1px; }
.aside .btn { width: 118px; }
.state { width: 93px; height: 13px; border: 1px solid #777; padding: 0 1px; margin-top: auto; margin-bottom: 1px; }
.docs { display: flex; padding: 1px 39px 0 11px; }
.docs label { width: 124px; flex: none; padding-top: 8px; }
.docs div { flex: 1; display: flex; flex-direction: column; gap: 6px; }
.doc-text { height: 16px; border: 1px solid #b5b5b5; text-align: center; }
.docs .ro { flex: none; }
.dfoot { margin-top: 35px; padding: 0 9px 0 5px; }
.dfoot .left, .dfoot .right { gap: 3px; }

.timer { position: absolute; left: 223px; top: 125px; width: 164px; height: 145px; background: #0c1628; box-shadow: 0 2px 10px rgba(0, 0, 0, .5); display: flex; flex-direction: column; font-family: "Open Sans", sans-serif; }
.timer-title { display: flex; align-items: center; height: 20px; background: #fff; padding: 0 10px 0 5px; gap: 4px; font-size: 8px; color: #333; }
.timer-title button { margin-left: auto; }
.timer output { height: 45px; line-height: 45px; padding-left: 45px; font-size: 18px; font-weight: 700; color: #fff; }
.timer-mark { padding-left: 65px; height: 29px; line-height: 46px; font-size: 8px; font-weight: 700; color: #d8b8a0; }
.timer-field { display: flex; align-items: center; margin: 0 7px 0 6px; height: 16px; background: #fff; border: 1px solid #3a86d0; padding-left: 3px; }
.timer-field input { flex: 1; color: #1763a8; padding-left: 2px; }
.timer-buttons { display: flex; gap: 6px; padding: 6px 6px 0; font-size: 8px; color: #222; }
.timer-buttons button { flex: 1; height: 19px; background: #e3e3e3; border: 1px solid #f4f4f4; }
.timer-buttons button:disabled { background: #bfbfbf; color: #8a8a8a; border-color: #cacaca; }
.mark { position: absolute; pointer-events: none; overflow: visible; fill: none; stroke-width: 5; stroke-linecap: round; }
.mark.orange { left: 206px; top: 122px; stroke: #ff7a1f; }
.mark.red { right: 8px; top: 185px; stroke: #f83b2f; }

.status { display: flex; justify-content: space-between; height: 14px; background: #eee; border-top: 1px solid #c9c9c9; padding: 0 4px 0 19px; font: 700 8px/13px Roboto, sans-serif; color: #222; }

.taskbar { display: flex; height: 25px; background: linear-gradient(90deg, #16242b, #1b3038 60%, #15262b); color: #fff; font: 8px/11px "Open Sans", sans-serif; }
.taskbar > button { width: 31px; }
.taskbar > .start { width: 30px; }
.tsearch { display: flex; align-items: center; gap: 7px; width: 180px; background: #f1f1f1; padding-left: 7px; color: #333; font-size: 9px; }
.tsearch input::placeholder { color: #444; opacity: 1; }
.flip { transform: scaleX(-1); }
.taskbar > .running { border-bottom: 2px solid #76b9ed; width: 26px; margin: 0 2px; }
.taskbar > .focus { background: #3c5150; width: 30px; margin: 0; }
.mint { color: #b8f0b4; }
.sky { color: #4fb0ea; }
.dark { color: #555; }
.tray { display: flex; align-items: center; gap: 5px; padding-right: 15px; margin-left: auto; }
.tray-help { margin-right: 22px; }
.weather { margin-right: 9px; }
.tray time { align-self: flex-start; padding-top: 1px; font-size: 7px; }
.chat { margin-left: 15px; }
</style>
